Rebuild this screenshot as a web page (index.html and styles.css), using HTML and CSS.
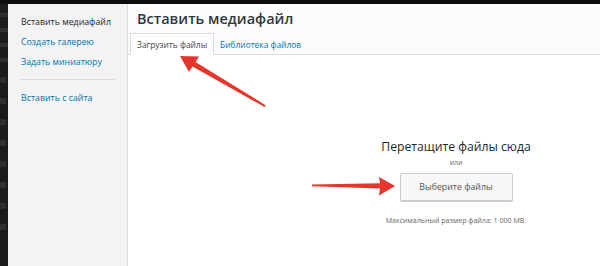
FILE: index.html
```html
<!DOCTYPE html>
<html lang="ru">
<head>
<meta charset="utf-8">
<link rel="stylesheet" href="styles.css">
</head>
<body>
<div class="topbar"></div>
<div class="frame">
  <div class="adminbar">
    <span class="gline"></span>
    <span class="gline"></span>
    <span class="gline"></span>
    <span class="gline"></span>
    <span class="gicon"></span>
    <span class="gicon"></span>
    <span class="gicon"></span>
    <span class="gicon"></span>
    <span class="gicon"></span>
    <span class="gicon"></span>
    <span class="gicon"></span>
    <span class="gicon"></span>
  </div>
  <nav class="sidebar">
    <a class="menu-item active">Вставить медиафайл</a>
    <a class="menu-item">Создать галерею</a>
    <a class="menu-item">Задать миниатюру</a>
    <div class="separator"></div>
    <a class="menu-item">Вставить с сайта</a>
  </nav>
  <main class="main">
    <header class="header">
      <h1 class="title">Вставить медиафайл</h1>
      <div class="tabs">
        <span class="tab current">Загрузить файлы</span>
        <span class="tab">Библиотека файлов</span>
      </div>
    </header>
    <section class="uploader">
      <h2 class="drop-title">Перетащите файлы сюда</h2>
      <p class="or">или</p>
      <button class="select-btn" type="button">Выберите файлы</button>
      <p class="max-size">Максимальный размер файла: 1 000 MB.</p>
    </section>
  </main>
</div>
<svg class="arrows" width="600" height="266" viewBox="0 0 600 266">
  <polygon fill="#e3362c" points="180,56 199,56.5 195.5,62 265.6,105.2 264.6,107 192.5,66.6 189,72"/>
  <polygon fill="#e3362c" points="312,184.6 380,183.3 379,177 395,186 379,195.5 380,188.6 312,186.2"/>
</svg>
</body>
</html>
```
FILE: styles.css
```css
* { box-sizing: border-box; }
html, body {
  margin: 0;
  padding: 0;
}
body {
  width: 600px;
  height: 266px;
  overflow: hidden;
  position: relative;
  background: #111;
  font-family: "Open Sans", "Noto Sans", sans-serif;
}
.topbar {
  height: 4px;
  background: #0d0d0d;
}
.frame {
  display: flex;
  height: 262px;
}
.adminbar {
  width: 8px;
  flex: none;
  background: #1c1c1c;
  overflow: hidden;
  display: flex;
  flex-direction: column;
  padding-top: 9px;
  gap: 11px;
}
.gline {
  display: block;
  width: 8px;
  height: 4px;
  background: #2e2e2e;
}
.gicon {
  display: block;
  width: 6px;
  height: 6px;
  margin-top: 4px;
  background: #2f2f2f;
  border-radius: 1px;
}
.sidebar {
  width: 120px;
  flex: none;
  background: #f3f3f3;
  border-right: 1px solid #dcdcdc;
  padding: 12px 0 0 13px;
  display: flex;
  flex-direction: column;
}
.menu-item {
  display: block;
  flex: none;
  font-size: 8.8px;
  line-height: 12px;
  height: 20px;
  color: #0073aa;
  white-space: nowrap;
}
.menu-item.active {
  color: #23282d;
  height: 20px;
}
.separator {
  flex: none;
  width: 95px;
  height: 1px;
  background: #dddddd;
  margin: 3px 0 12px -1px;
}
.main {
  width: 656px;
  flex: none;
  background: #fff;
}
.header {
  height: 51px;
  background: #fcfcfc;
  border-bottom: 1px solid #dddddd;
  padding: 5px 0 0 2px;
}
.title {
  margin: 0 0 4px 7px;
  font-size: 14.5px;
  line-height: 20px;
  font-weight: 600;
  color: #32373c;
}
.tabs {
  display: flex;
  align-items: flex-end;
}
.tab {
  display: block;
  height: 22px;
  padding: 0 5px;
  font-size: 8.4px;
  line-height: 21px;
  color: #0073aa;
  border: 1px solid transparent;
  border-bottom: 0;
}
.tab.current {
  background: #fff;
  border-color: #dddddd;
  color: #444;
  padding: 0 6px 0 6px;
}
.uploader {
  display: flex;
  flex-direction: column;
  align-items: center;
  padding-top: 83px;
}
.drop-title {
  margin: 0;
  font-size: 12.2px;
  line-height: 18px;
  font-weight: 400;
  color: #23282d;
}
.or {
  margin: 2px 0 0;
  font-size: 6.8px;
  line-height: 10px;
  color: #666;
}
.select-btn {
  margin-top: 5px;
  width: 113px;
  height: 28px;
  background: #f7f7f7;
  border: 1px solid #cccccc;
  border-radius: 2px;
  box-shadow: 0 1px 0 #cccccc;
  font-family: inherit;
  font-size: 8.8px;
  color: #555;
  padding: 0;
}
.max-size {
  margin: 14px 0 0;
  font-size: 7.1px;
  line-height: 10px;
  color: #666;
}
.arrows {
  position: absolute;
  left: 0;
  top: 0;
  pointer-events: none;
}
```
